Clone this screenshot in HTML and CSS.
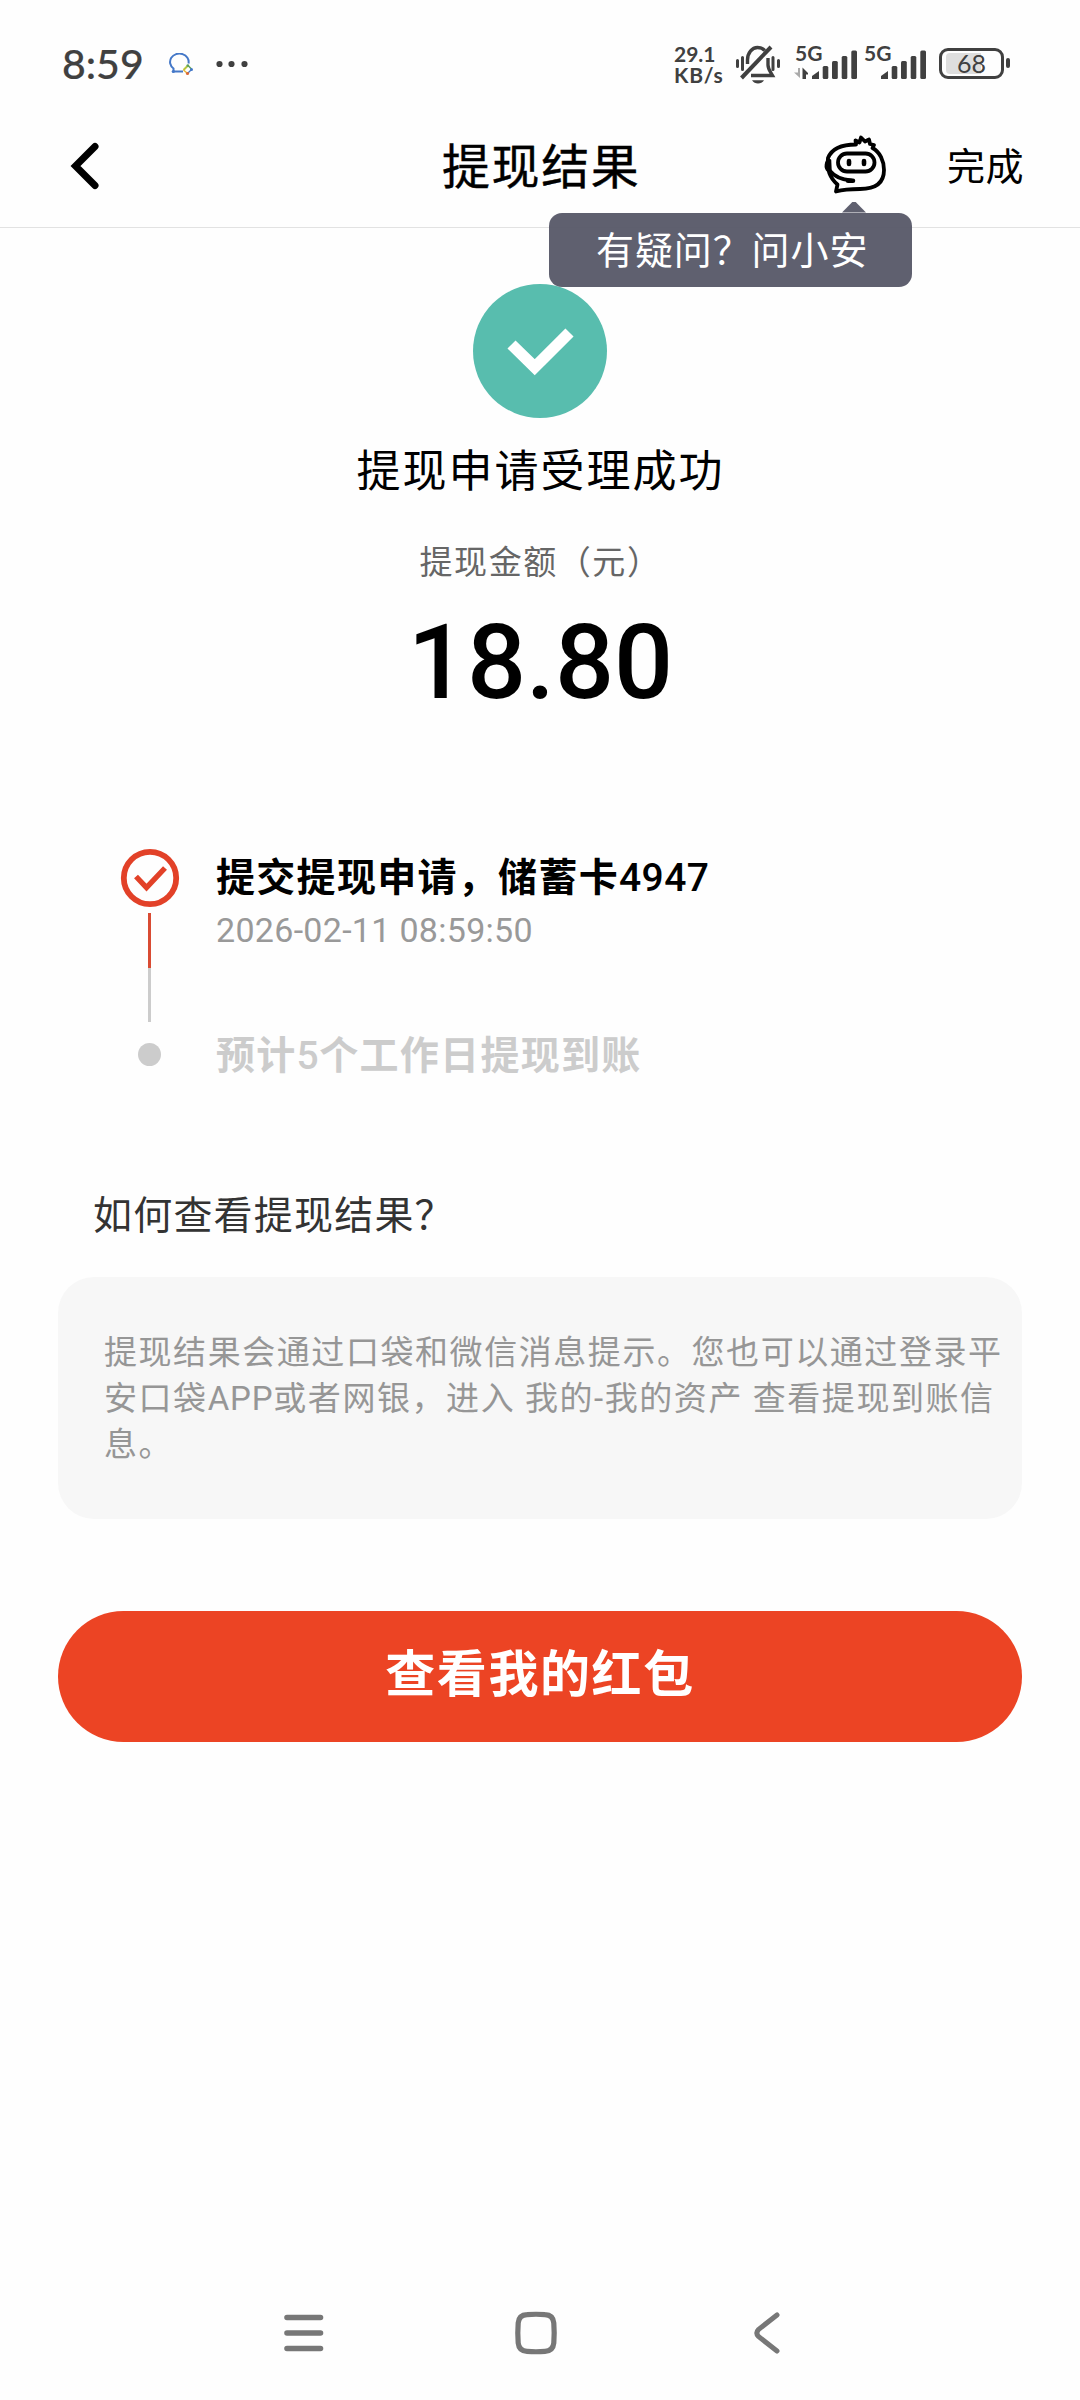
FILE: index.html
```html
<!DOCTYPE html>
<html lang="zh-CN">
<head>
<meta charset="utf-8">
<title>提现结果</title>
<link rel="stylesheet" href="styles.css">
</head>
<body>
<div class="screen">
  <div class="status">
    <span class="clock">8:59</span>
    <svg class="chat" width="26" height="24" viewBox="0 0 26 24" fill="none">
      <path d="M5.500 18.500 V15.500 A9.300 8.400 0 1 1 20.500 10.500 M5.500 18.500 H15" stroke="#4478c8" stroke-width="2"/>
      <circle cx="5.300" cy="18.500" r="1.600" fill="#4478c8"/>
      <path d="M19.500 13 L15.500 17" stroke="#b9c83c" stroke-width="2"/>
      <path d="M20 12.500 L23.500 16" stroke="#5da05a" stroke-width="1.500"/>
      <path d="M15.500 17 L19.500 20.500" stroke="#e8b53c" stroke-width="1.500"/>
      <path d="M19.500 20.500 L23.500 16.500" stroke="#4478c8" stroke-width="1.300"/>
      <circle cx="23.500" cy="16.500" r="1.500" fill="#4478c8"/>
      <circle cx="19.500" cy="20.500" r="1.600" fill="#dc6a35"/>
      <circle cx="19.800" cy="12.600" r="1.300" fill="#5da05a"/>
    </svg>
    <svg class="dots" width="32" height="8" viewBox="0 0 32 8" fill="#404040"><circle cx="3.500" cy="4" r="3.100"/><circle cx="15.500" cy="4" r="3.100"/><circle cx="28.500" cy="4" r="3.100"/></svg>
    <span class="speed">29.1<br><span class="unit">KB/s</span></span>
    <svg class="bell" width="46" height="40" viewBox="0 0 46 40" fill="none" stroke="#404040" stroke-width="3.400">
      <path d="M12.500 19 V15 C12.500 8 17 2.500 22.500 2.500 C25.500 2.500 28 3.500 29.800 5.500"/>
      <path d="M33 13 V20 C33 24 35 26 37.500 30.500 H16"/>
      <path d="M36 2 L6.500 33" stroke-width="4"/>
      <path d="M17 35.300 H29 C27.500 37.500 25.500 38.600 23 38.600 C20.500 38.600 18.500 37.500 17 35.300 Z" fill="#404040" stroke="none"/>
      <path d="M2.500 15.500 V21.500 M7.500 12.500 V24.500 M38 12.500 V24.500 M43.500 15.500 V21.500" stroke-width="3" stroke-linecap="round"/>
    </svg>
    <div class="net net-a">
      <span class="gen">5G</span>
      <svg width="64" height="35" viewBox="0 0 64 35" fill="#404040">
        <path d="M0 25.500 L6 31 V21 H4 V25.500 Z" fill="#aaa"/><path d="M8.500 32 V20.500 L14 26 V27.500 H12 V32 Z"/>
        <path d="M18 32 V29 L25 24 V32 Z"/><rect x="28.700" y="19" width="5.600" height="13" rx="1.500"/><rect x="38" y="14" width="5.800" height="18" rx="1.500"/><rect x="47.700" y="9" width="5.600" height="23" rx="1.500"/><rect x="57.300" y="3.500" width="5.700" height="28.500" rx="1.500"/>
      </svg>
    </div>
    <div class="net net-b">
      <span class="gen">5G</span>
      <svg width="64" height="35" viewBox="0 0 64 35" fill="#404040">
        <path d="M18 32 V29 L25 24 V32 Z"/><rect x="28.700" y="19" width="5.600" height="13" rx="1.500"/><rect x="38" y="14" width="5.800" height="18" rx="1.500"/><rect x="47.700" y="9" width="5.600" height="23" rx="1.500"/><rect x="57.300" y="3.500" width="5.700" height="28.500" rx="1.500"/>
      </svg>
    </div>
    <div class="battery"><span class="level">68</span></div>
    <i class="nub"></i>
  </div>

  <header class="header">
    <svg class="back" width="32" height="50" viewBox="0 0 32 50" fill="none" stroke="#000" stroke-width="7" stroke-linecap="round"><path d="M25 5.500 L5.500 25 L25 44.500"/></svg>
    <h1 class="title">提现结果</h1>
    <div class="help">
      <svg width="64" height="60" viewBox="0 0 64 60" fill="none" stroke="#000" stroke-width="3.800" stroke-linejoin="round" stroke-linecap="round">
        <path d="M5 24 C9 14 20 10.500 33 10.500 L32.500 6.500 L36.500 8.500 L38 3.500 L42 7.500 L46 5.500 L47 10 L51 11 L49.500 14 C57 18 61 27 61 36 C61 49 52 55 37 55 C30 55 22 55 13 57.500 L14.500 50.500 C8 45 3.500 36 5 24 Z"/>
        <path d="M6 25 C2 27 1 34 4.500 37 L8 37 L7.500 26 Z" fill="#000" stroke-width="1.500"/>
        <path d="M7 37 C11 42 18 45.500 28 46.500"/>
        <path d="M25 46.800 H30" stroke-width="4.500"/>
        <rect x="15" y="19.500" width="36.500" height="18" rx="9" stroke-width="3.800"/>
        <path d="M26 27 V30 M41 27 V30" stroke-width="4.600"/>
      </svg>
      <div class="tip">有疑问？问小安</div>
    </div>
    <span class="done">完成</span>
  </header>

  <main>
    <section class="result">
      <svg class="ok" width="134" height="134" viewBox="0 0 134 134"><circle cx="67" cy="67" r="67" fill="#58bdae"/><path d="M38.500 60.500 L61.700 83.200 L96.500 48.500" fill="none" stroke="#fff" stroke-width="11.500"/></svg>
      <p class="message">提现申请受理成功</p>
      <p class="label">提现金额（元）</p>
      <p class="amount">18.80</p>
    </section>

    <section class="steps">
      <div class="rail">
        <svg width="60" height="60" viewBox="0 0 60 60" fill="none" stroke="#e24128"><circle cx="30" cy="30" r="26.200" stroke-width="5.800"/><path d="M16 28.500 L26.500 39.500 L45 20" stroke-width="5.400"/></svg>
        <div class="line"></div>
        <div class="dot"></div>
      </div>
      <div class="step-texts">
        <p class="step">提交提现申请，储蓄卡<span class="num">4947</span></p>
        <p class="time">2026-02-11 08:59:50</p>
        <p class="step pending">预计<span class="num">5</span>个工作日提现到账</p>
      </div>
    </section>

    <h2 class="question">如何查看提现结果？</h2>
    <div class="card">提现结果会通过口袋和微信消息提示。您也可以通过登录平<br>安口袋<span class="latin">APP</span>或者网银，进入 我的-我的资产 查看提现到账信<br>息。</div>
    <button class="cta">查看我的红包</button>
  </main>

  <nav class="nav">
    <svg width="40" height="44" viewBox="0 0 40 44" stroke="#777" stroke-width="5.600" stroke-linecap="round"><path d="M3 6.500 H36.500 M3 22 H36.500 M3 37.500 H36.500"/></svg>
    <svg class="home" width="44" height="44" viewBox="0 0 44 44" fill="none" stroke="#777" stroke-width="5.200"><path d="M13 3.700 Q22 2.800 31 3.700 Q39 4 39.800 12 Q40.600 22 39.800 32 Q39 40 31 40.300 Q22 41.200 13 40.300 Q5 40 4.200 32 Q3.400 22 4.200 12 Q5 4 13 3.700 Z"/></svg>
    <svg width="30" height="44" viewBox="0 0 30 44" fill="none" stroke="#777" stroke-width="5" stroke-linecap="round"><path d="M25 4 L6.500 18.500 Q3.200 22 6.500 25.500 L25 40"/></svg>
  </nav>
</div>
</body>
</html>
```
FILE: styles.css
```css
* { box-sizing: border-box; margin: 0; padding: 0; }

body {
  background: #fefefe;
  color: #000;
  font-family: Roboto, "Noto Sans CJK SC", sans-serif;
}

svg { display: block; flex: none; }

.screen {
  width: 1080px;
  height: 2400px;
  display: flex;
  flex-direction: column;
  white-space: nowrap;
}

/* status bar */
.status {
  height: 104px;
  padding: 0 69px 0 62px;
  display: flex;
  align-items: flex-start;
  color: #404040;
  font-family: Lato, sans-serif;
}
.clock { width: 106px; margin-top: 40px; font-size: 41px; line-height: 48px; font-weight: 500; -webkit-text-stroke: 0.200px #404040; }
.chat { margin-top: 53px; }
.dots { margin: 60px 0 0 22px; }
.speed { width: 59px; margin: 43px 0 0 426px; font-size: 21px; line-height: 21px; font-weight: 700; }
.unit { letter-spacing: 0.800px; }
.bell { margin: 45px 0 0 2px; }
.net { width: 68px; margin-top: 45px; position: relative; }
.net-a { margin-left: 13px; }
.net-b { margin-left: 1px; }
.net svg { margin-top: 2px; }
.gen { position: absolute; left: 1px; top: -2px; font-size: 21px; line-height: 20px; font-weight: 700; }
.battery {
  width: 65px;
  height: 31px;
  margin: 48px 0 0 8px;
  border: 3px solid #404040;
  border-radius: 9px;
  padding: 2px 4px;
}
.level {
  display: block;
  text-align: center;
  font-size: 25px;
  line-height: 21px;
  border-radius: 4px;
  background: linear-gradient(90deg, #dedede 68%, transparent 68%);
}
.nub { width: 4px; height: 10px; margin: 58px 0 0 2px; border-radius: 2px; background: #404040; }

/* title bar */
.header {
  height: 124px;
  border-bottom: 1px solid #e2e2e2;
  display: grid;
  grid-template-columns: 69px 373px 381px 124px 133px;
  align-items: center;
}
.back { grid-column: 2; margin: 1px 0 0 1px; }
.title { font-size: 48px; line-height: 60px; font-weight: 400; letter-spacing: 1.600px; padding-top: 4px; -webkit-text-stroke: 0.400px #000; }
.help { position: relative; top: -2px; }
.done { font-size: 38px; line-height: 48px; letter-spacing: 0.600px; padding-top: 3px; }
.tip {
  position: absolute;
  z-index: 1;
  left: -274px;
  top: 79px;
  width: 363px;
  height: 74px;
  padding: 0 0 0 47px;
  border-radius: 13px;
  background: rgba(85, 86, 102, 0.940);
  color: #fff;
  font-size: 38px;
  line-height: 77px;
  letter-spacing: 0.900px;
}
.tip::before {
  content: "";
  position: absolute;
  left: 293px;
  top: -11px;
  width: 24px;
  height: 11px;
  background: rgba(85, 86, 102, 0.940);
  clip-path: polygon(0 100%, 43% 5%, 50% 0, 57% 5%, 100% 100%);
}

/* outcome */
.result { padding-top: 56px; display: flex; flex-direction: column; align-items: center; }
.message { margin: 24px 0 0 1px; font-size: 44px; line-height: 60px; letter-spacing: 2px; }
.label { margin: 36px 0 0 1px; color: #666; font-size: 33px; line-height: 50px; letter-spacing: 1.560px; }
.amount { margin: 15px 0 0 1px; font-size: 104px; line-height: 120px; font-weight: 500; }

/* progress */
.steps { margin-top: 125px; padding-left: 120px; display: flex; }
.rail { width: 60px; display: flex; flex-direction: column; align-items: center; }
.line { width: 3px; height: 109px; margin: 5px 1px 0 0; background: linear-gradient(#d94b33 50%, #ccc 50%); }
.dot { width: 23px; height: 23px; margin: 21px 1px 0 0; border-radius: 50%; background: #ccc; }
.step-texts { padding: 2px 0 0 36px; height: 217px; }
.step { font-size: 39px; line-height: 56px; font-weight: 600; letter-spacing: 1.300px; }
.num { font-weight: 500; letter-spacing: 0.400px; }
.time { color: #999; font-size: 34px; line-height: 48px; letter-spacing: 0.300px; }
.pending { color: #ccc; margin-top: 74px; }

.question { margin: 122px 0 0 93px; color: #333; font-size: 39px; line-height: 56px; font-weight: 400; letter-spacing: 1.200px; }
.card {
  margin: 33px 58px 0;
  height: 242px;
  padding: 53px 0 0 46px;
  border-radius: 36px;
  background: #f7f7f7;
  color: #969696;
  font-size: 33px;
  line-height: 46px;
  letter-spacing: 1.560px;
}
.latin { letter-spacing: 0.800px; }
.cta {
  display: block;
  width: 964px;
  height: 131px;
  margin: 92px auto 0;
  border: 0;
  border-radius: 66px;
  background: #ec4424;
  color: #fff;
  font: 700 50px/129px Roboto, "Noto Sans CJK SC", sans-serif;
  letter-spacing: 1.600px;
  padding-bottom: 2px;
}

/* system navigation */
.nav {
  margin: auto 298px 45px 284px;
  display: flex;
  justify-content: space-between;
}
.home { margin-right: 5px; }
```
